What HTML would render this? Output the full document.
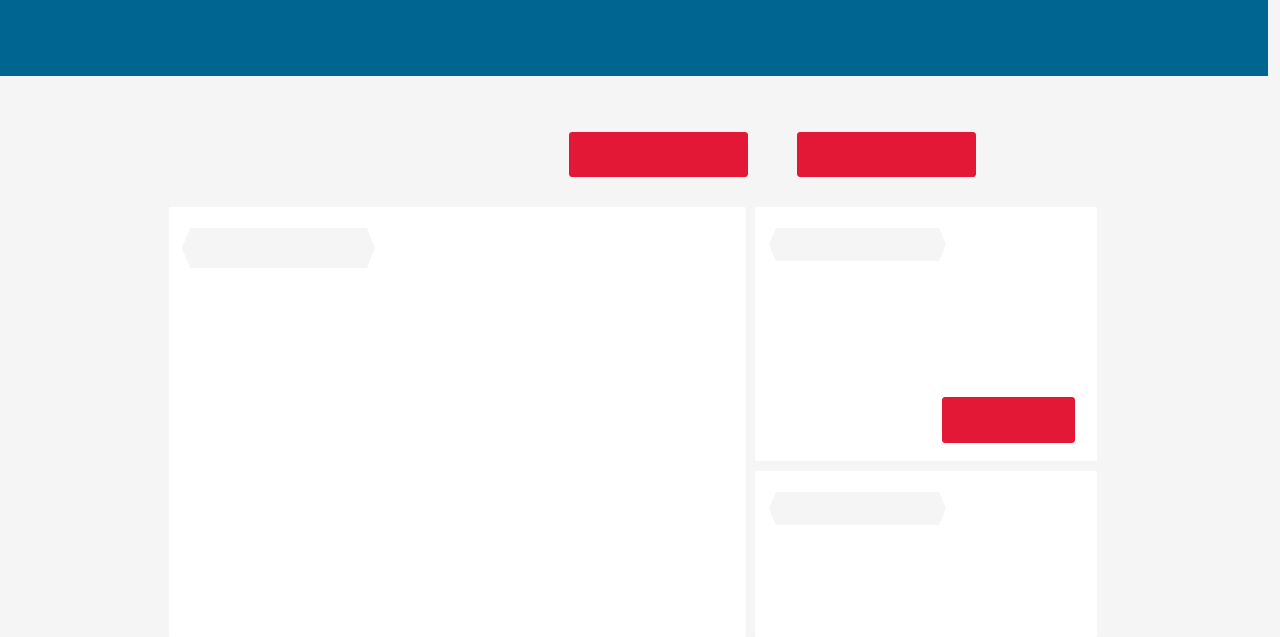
<!DOCTYPE html>
<html style="overflow:hidden;height:637px"><head><style>
html,body{margin:0;width:1280px;height:637px;overflow:hidden}
body{background:#f5f5f5;position:relative;font-family:"Liberation Sans",sans-serif}
div{position:absolute}
.hdr{left:0;top:0;width:1268px;height:76px;background:#006591}
.btn{background:#e31837;border-radius:3px}
.card{background:#fff;border-radius:2px}
.hex{background:#f5f5f5}
</style></head><body>
<div class="hdr"></div>
<div class="btn" style="left:569px;top:132px;width:179px;height:45px"></div>
<div class="btn" style="left:797px;top:132px;width:179px;height:45px"></div>
<div class="card" style="left:169px;top:207px;width:577px;height:430px"></div>
<div class="card" style="left:755px;top:207px;width:342px;height:254px"></div>
<div class="card" style="left:755px;top:471px;width:342px;height:166px"></div>
<div class="hex" style="left:182px;top:228px;width:193px;height:40px;clip-path:polygon(8px 0,185px 0,100% 50%,185px 100%,8px 100%,0 50%)"></div>
<div class="hex" style="left:769px;top:228px;width:177px;height:33px;clip-path:polygon(7px 0,170px 0,100% 50%,170px 100%,7px 100%,0 50%)"></div>
<div class="hex" style="left:769px;top:492px;width:177px;height:33px;clip-path:polygon(7px 0,170px 0,100% 50%,170px 100%,7px 100%,0 50%)"></div>
<div class="btn" style="left:942px;top:397px;width:133px;height:46px"></div>
</body></html>
